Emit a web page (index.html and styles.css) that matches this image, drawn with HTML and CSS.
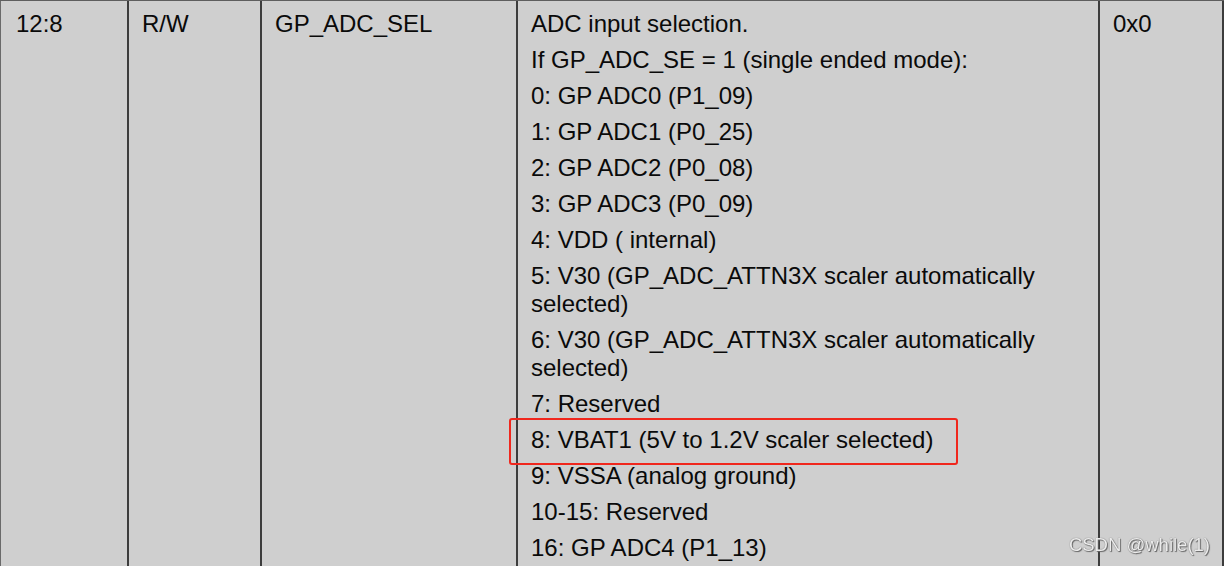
FILE: index.html
```html
<!DOCTYPE html>
<html lang="en">
<head>
<meta charset="utf-8">
<title>GP_ADC_SEL register field</title>
<link rel="stylesheet" href="styles.css">
</head>
<body>
<div class="reg-table">
  <div class="row">
    <div class="cell cell-bits">12:8</div>
    <div class="cell cell-access">R/W</div>
    <div class="cell cell-name">GP_ADC_SEL</div>
    <div class="cell cell-desc">
      <p class="line">ADC input selection.</p>
      <p class="line">If GP_ADC_SE = 1 (single ended mode):</p>
      <p class="line">0: GP ADC0 (P1_09)</p>
      <p class="line">1: GP ADC1 (P0_25)</p>
      <p class="line">2: GP ADC2 (P0_08)</p>
      <p class="line">3: GP ADC3 (P0_09)</p>
      <p class="line">4: VDD ( internal)</p>
      <p class="line">5: V30 (GP_ADC_ATTN3X scaler automatically selected)</p>
      <p class="line">6: V30 (GP_ADC_ATTN3X scaler automatically selected)</p>
      <p class="line">7: Reserved</p>
      <p class="line highlighted">8: VBAT1 (5V to 1.2V scaler selected)<span class="mark"></span></p>
      <p class="line">9: VSSA (analog ground)</p>
      <p class="line">10-15: Reserved</p>
      <p class="line last">16: GP ADC4 (P1_13)</p>
    </div>
    <div class="cell cell-reset">0x0</div>
  </div>
</div>
<div class="watermark">CSDN @while(1)</div>
</body>
</html>
```

FILE: styles.css
```css
html, body {
  margin: 0;
  padding: 0;
  width: 1224px;
  height: 566px;
  overflow: hidden;
  background: #cfcfcf;
}

body {
  font-family: "Liberation Sans", Arial, sans-serif;
  color: #0a0a0a;
  font-size: 24px;
  line-height: 28px;
}

.reg-table {
  border-top: 1px solid #5e5e5e;
  height: 565px;
}

.row {
  display: grid;
  grid-template-columns: 127px 133px 256px 582px 126px;
  height: 100%;
}

.cell {
  border-left: 2px solid #3c3c3c;
  padding: 9px 10px 0 13px;
}

.cell-bits {
  border-left: 1px solid #6a6a6a;
  padding-left: 15px;
}

.cell-reset {
  border-right: 2px solid #3c3c3c;
}

.line {
  margin: 0 0 8px 0;
}

.line.last {
  margin-bottom: 0;
}

.cell-desc {
  padding-right: 40px;
}

.highlighted {
  position: relative;
}

.mark {
  position: absolute;
  left: -22px;
  top: -8px;
  width: 449px;
  height: 47px;
  box-sizing: border-box;
  border: 2px solid #f0271d;
  border-radius: 3px;
}

.watermark {
  position: fixed;
  right: 14px;
  bottom: 11px;
  font-size: 18.5px;
  line-height: 20px;
  color: #ececec;
  text-shadow: 0 0 1px #555, 1px 1px 1px #666;
}
```
